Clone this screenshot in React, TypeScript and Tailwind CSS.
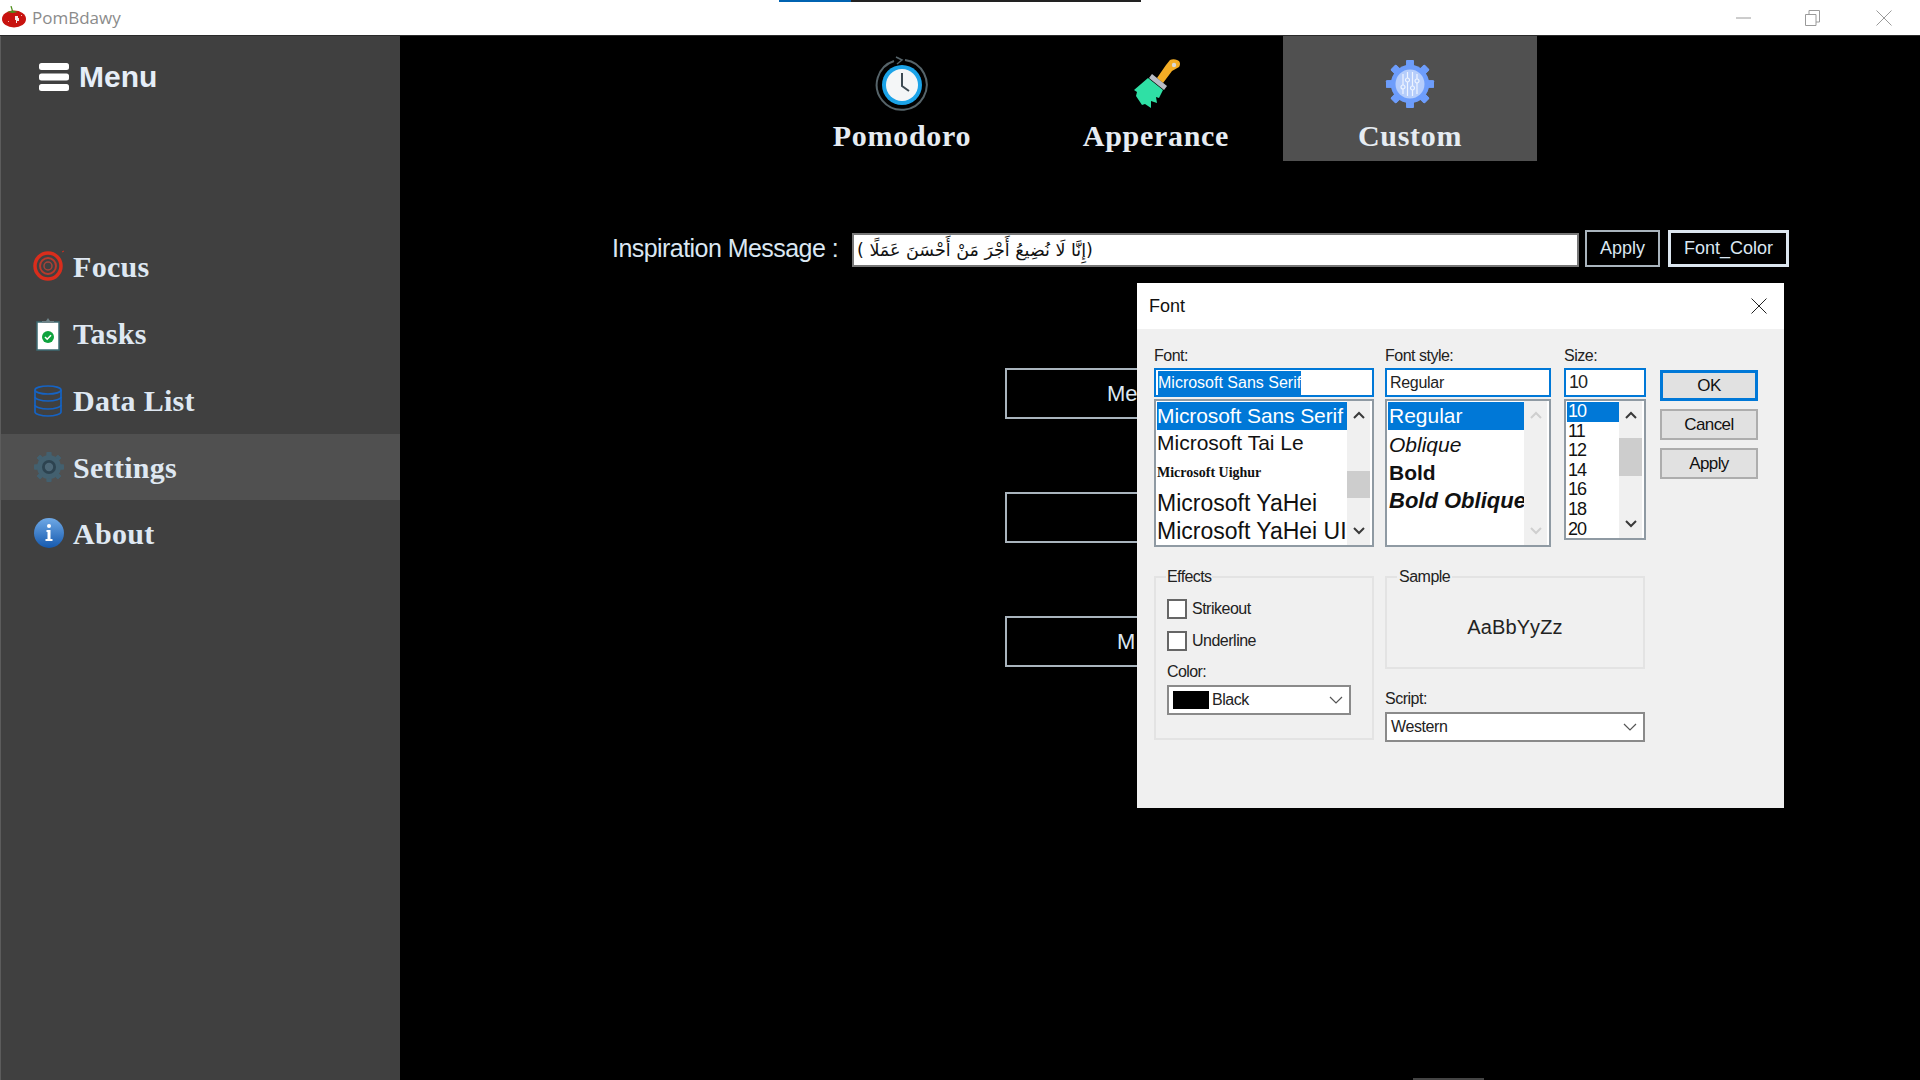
const dialogFont = "[font-family:'Liberation_Sans',Arial,sans-serif]";

const menuItems = [
  { label: 'Focus', icon: <TargetIcon />, rowClass: 'h-[68px]' },
  { label: 'Tasks', icon: <ClipboardIcon />, rowClass: 'h-[67px]' },
  { label: 'Data List', icon: <DatabaseIcon />, rowClass: 'h-[67px]' },
  { label: 'Settings', icon: <SettingsIcon />, rowClass: 'h-[66px] bg-[#505050]' },
  { label: 'About', icon: <InfoIcon />, rowClass: 'h-[66px]' },
];

function TomatoIcon() {
  return (
    <svg width="26" height="24" viewBox="0 0 26 24">
      <ellipse cx="13" cy="13" rx="12" ry="8.500" fill="#c8130f" />
      <path d="M10 0l1.500 5" stroke="#4f8f1c" strokeWidth="1.200" />
      <path d="M6 6l5.500-1.500L17 6l-5.500 1z" fill="#4f8f1c" />
      <path d="M14 10h3v2h1v3h-2v2h-1v-3h-1z" fill="#f7e9e6" />
      <rect x="7" y="15" width="1" height="1" fill="#f6b9b2" />
      <rect x="20" y="9" width="1" height="1" fill="#f6b9b2" />
    </svg>
  );
}

function WindowControls() {
  return (
    <div className="flex items-center text-[#9a9a9a]">
      <svg width="15" height="15" viewBox="0 0 15 15" className="mr-[54px]">
        <path d="M0 8h15" stroke="currentColor" />
      </svg>
      <svg width="15" height="16" viewBox="0 0 15 16" className="mr-[56px]">
        <path d="M.5 4.500h10.500v11H.5zM4 4.500V.5h10.500V12H11" fill="none" stroke="currentColor" />
      </svg>
      <svg width="16" height="16" viewBox="0 0 16 16" className="mr-[28px]">
        <path d="M.5.5l15 15M15.500.5l-15 15" stroke="currentColor" />
      </svg>
    </div>
  );
}

function HamburgerIcon() {
  return (
    <svg width="30" height="28" viewBox="0 0 30 28">
      <rect x="0" y="0" width="30" height="7" rx="2.500" fill="#fff" />
      <rect x="0" y="10.500" width="30" height="7" rx="2.500" fill="#fff" />
      <rect x="0" y="21" width="30" height="7" rx="2.500" fill="#fff" />
    </svg>
  );
}

function TargetIcon() {
  return (
    <svg width="32" height="32" viewBox="0 0 32 32">
      <circle cx="15" cy="16" r="13" fill="none" stroke="#d92d1c" strokeWidth="3.500" />
      <circle cx="15" cy="16" r="8" fill="none" stroke="#b8392c" strokeWidth="2" />
      <circle cx="15" cy="16" r="4" fill="none" stroke="#a8433a" strokeWidth="1.500" />
      <path d="M29 2l2-1" stroke="#d92d1c" />
    </svg>
  );
}

function ClipboardIcon() {
  return (
    <svg width="32" height="34" viewBox="0 0 32 34">
      <rect x="4" y="5" width="22" height="28" fill="#fff" stroke="#3c6a72" strokeWidth="1.500" />
      <path d="M9 6V4h4l2-3 2 3h4v2z" fill="#6d8388" />
      <circle cx="15" cy="20" r="6" fill="#0ea33e" />
      <path d="M12 20l2.200 2.200 3.800-4" fill="none" stroke="#fff" strokeWidth="1.600" />
    </svg>
  );
}

function DatabaseIcon() {
  return (
    <svg width="32" height="32" viewBox="0 0 32 32" fill="none" stroke="#1563c4" strokeWidth="1.700">
      <ellipse cx="15" cy="5" rx="13" ry="4" />
      <path d="M2 5v22c0 2 6 4 13 4s13-2 13-4V5" />
      <path d="M2 12c0 2 6 4 13 4s13-2 13-4M2 20c0 2 6 4 13 4s13-2 13-4" />
    </svg>
  );
}

function Gear({ fill, size, teeth = 8 }: { fill: string; size: number; teeth?: number }) {
  const angles = Array.from({ length: teeth }, (_, i) => (i * 360) / teeth);
  return (
    <g>
      {angles.map(a => (
        <rect key={a} x={-size * 0.16} y={-size} width={size * 0.32} height={size * 2} rx={size * 0.05} fill={fill} transform={`rotate(${a})`} />
      ))}
      <circle r={size * 0.8} fill={fill} />
    </g>
  );
}

function SettingsIcon() {
  return (
    <svg width="32" height="32" viewBox="-16 -16 32 32">
      <Gear fill="#43606f" size={15} />
      <circle r="7" fill="#2d4350" />
      <circle r="4.200" fill="#4d6776" />
    </svg>
  );
}

function InfoIcon() {
  return (
    <svg width="32" height="32" viewBox="0 0 32 32">
      <defs>
        <linearGradient id="infoFill" x1="0" y1="0" x2="0" y2="1">
          <stop offset="0" stopColor="#6fa9e6" />
          <stop offset="1" stopColor="#1559ae" />
        </linearGradient>
      </defs>
      <circle cx="16" cy="16" r="15" fill="url(#infoFill)" />
      <circle cx="16" cy="9" r="2" fill="#fff" />
      <path d="M13.500 13h4v9h2v2h-7v-2h2v-7h-1z" fill="#fff" />
    </svg>
  );
}

function ClockIcon() {
  return (
    <svg width="54" height="56" viewBox="0 0 54 56">
      <path d="M30 4A25 25 0 1 1 19 5" fill="none" stroke="#56646a" strokeWidth="2" />
      <path d="M21 1l6 3-5 4" fill="none" stroke="#56646a" strokeWidth="1.500" />
      <circle cx="27" cy="29" r="20" fill="#1ba3e8" />
      <circle cx="27" cy="29" r="16" fill="#f4f6f7" />
      <path d="M27 17v13l7 5" fill="none" stroke="#3d4a52" strokeWidth="2" />
    </svg>
  );
}

function BrushIcon() {
  return (
    <svg width="52" height="52" viewBox="0 0 52 52">
      <path d="M47 2c3 1 4 4 2 7l-7 4-9 12-6-5 9-13 4-5c2-1 5-1 7 0z" fill="#f4ad25" />
      <circle cx="44" cy="7" r="2.200" fill="#d9d9d9" />
      <path d="M22 16l15 12-3 4-15-12z" fill="#b9bcc6" />
      <path d="M18 20l15 12-4 8-3-1 1 6-6-2 0 7-6-4-3 1-6-9 1-4-3-2z" fill="#2fe0a5" />
    </svg>
  );
}

function CustomGearIcon() {
  return (
    <svg width="50" height="50" viewBox="-25 -25 50 50">
      <Gear fill="#6d9dfb" size={24} />
      <circle r="14.500" fill="#b5cdfb" />
      <g stroke="#eef4ff" strokeWidth="1.200" fill="#b5cdfb">
        <path d="M-7-10V10M-2.500-12V12M2.500-12V12M7-10V10" />
        <circle cx="-7" cy="3" r="2" />
        <circle cx="-2.500" cy="-4" r="2" />
        <circle cx="2.500" cy="4" r="2" />
        <circle cx="7" cy="-3" r="2" />
      </g>
    </svg>
  );
}

function Chevron({ dir = 'down', color = '#3a3a3a' }: { dir?: 'up' | 'down'; color?: string }) {
  return (
    <svg width="12" height="8" viewBox="0 0 12 8">
      <path d={dir === 'up' ? 'M1 7l5-5 5 5' : 'M1 1l5 5 5-5'} fill="none" stroke={color} strokeWidth="2" />
    </svg>
  );
}

function ComboChevron() {
  return (
    <svg width="14" height="9" viewBox="0 0 14 9">
      <path d="M1 1l6 6 6-6" fill="none" stroke="#555" strokeWidth="1.200" />
    </svg>
  );
}

function Scrollbar({ thumbClass, color }: { thumbClass?: string; color?: string }) {
  return (
    <div className="w-[23px] mr-[2px] bg-[#f0f0f0] flex flex-col items-center justify-between py-[10px] relative">
      <Chevron dir="up" color={color} />
      {thumbClass && <div className={thumbClass} />}
      <Chevron color={color} />
    </div>
  );
}

function CheckRow({ label }: { label: string }) {
  return (
    <div className="flex items-center gap-[5px] h-[20px] text-[16px] tracking-[-0.5px] text-[#222]">
      <div className="w-[20px] h-[20px] bg-white border-2 border-[#666]" />
      {label}
    </div>
  );
}

function FontDialog() {
  return (
    <div className={`absolute left-[1137px] top-[283px] w-[647px] h-[525px] bg-[#f0f0f0] ${dialogFont}`}>
      <div className="h-[46px] bg-white flex items-center justify-between pl-[12px] pr-[17px] text-[18px] text-[#111]">
        Font
        <svg width="16" height="16" viewBox="0 0 16 16">
          <path d="M.5.5l15 15M15.500.5l-15 15" stroke="#222" />
        </svg>
      </div>

      <div className="pl-[17px] pt-[17px]">
        <div className="flex">
          <div className="w-[220px]">
            <div className="h-[20px] mb-[2px] text-[16px] leading-[20px] tracking-[-0.5px] text-[#222]">Font:</div>
            <div className="h-[29px] bg-white border-2 border-[#0078d7] flex items-center pl-[2px] text-[16px] text-[#222]">
              <span className="bg-[#0078d7] text-white">Microsoft Sans Serif</span>
            </div>
            <div className="mt-[2px] h-[148px] bg-white border-2 border-[#8f9aa3] flex text-[21px] text-[#111]">
              <div className="flex-1 min-w-0 pt-[1px] pl-[1px] overflow-hidden whitespace-nowrap">
                <div className="h-[28px] leading-[28px] bg-[#0078d7] text-white tracking-[-0.1px]">Microsoft Sans Serif</div>
                <div className="h-[26px] leading-[26px]">Microsoft Tai Le</div>
                <div className="h-[33px] leading-[33px] text-[14px] font-['Liberation_Serif'] font-bold">Microsoft Uighur</div>
                <div className="h-[28px] leading-[28px] text-[23px]">Microsoft YaHei</div>
                <div className="h-[28px] leading-[28px] text-[23px]">Microsoft YaHei UI</div>
              </div>
              <Scrollbar thumbClass="absolute left-0 top-[70px] w-[23px] h-[27px] bg-[#cdcdcd]" />
            </div>
          </div>

          <div className="w-[166px] ml-[11px]">
            <div className="h-[20px] mb-[2px] text-[16px] leading-[20px] tracking-[-0.5px] text-[#222]">Font style:</div>
            <div className="h-[29px] bg-white border-2 border-[#0078d7] flex items-center pl-[3px] text-[16px] tracking-[-0.3px] text-[#222]">Regular</div>
            <div className="mt-[2px] h-[148px] bg-white border-2 border-[#8f9aa3] flex text-[21px] text-[#111]">
              <div className="flex-1 min-w-0 pt-[1px] pl-[1px] overflow-hidden whitespace-nowrap">
                <div className="h-[28px] leading-[28px] bg-[#0078d7] text-white pl-[1px]">Regular</div>
                <div className="h-[29px] leading-[29px] italic pl-[1px]">Oblique</div>
                <div className="h-[28px] leading-[28px] font-bold pl-[1px]">Bold</div>
                <div className="h-[28px] leading-[28px] text-[22px] font-bold italic pl-[1px]">Bold Oblique</div>
              </div>
              <Scrollbar color="#cfcfcf" />
            </div>
          </div>

          <div className="w-[82px] ml-[13px]">
            <div className="h-[20px] mb-[2px] text-[16px] leading-[20px] tracking-[-0.5px] text-[#222]">Size:</div>
            <div className="h-[29px] bg-white border-2 border-[#0078d7] flex items-center pl-[3px] text-[18px] tracking-[-1px] text-[#222]">10</div>
            <div className="mt-[2px] h-[141px] bg-white border-2 border-[#8f9aa3] flex text-[18px] tracking-[-1px] text-[#111]">
              <div className="flex-1 pt-[1px] pl-[1px]">
                {['10', '11', '12', '14', '16', '18', '20'].map((size, i) => (
                  <div key={size} className={i === 0 ? 'h-[19.6px] leading-[19.6px] bg-[#0078d7] text-white pl-[1px]' : 'h-[19.6px] leading-[19.6px] pl-[1px]'}>
                    {size}
                  </div>
                ))}
              </div>
              <Scrollbar thumbClass="absolute left-0 top-[37px] w-[23px] h-[38px] bg-[#cdcdcd]" />
            </div>
          </div>

          <div className="w-[98px] ml-[14px] pt-[24px] flex flex-col gap-[8px] text-[17px] tracking-[-0.6px] text-[#111]">
            <div className="h-[31px] bg-[#e1e1e1] border-[3px] border-[#0078d7] flex items-center justify-center">OK</div>
            <div className="h-[31px] bg-[#e1e1e1] border-2 border-[#adadad] flex items-center justify-center">Cancel</div>
            <div className="h-[31px] bg-[#e1e1e1] border-2 border-[#adadad] flex items-center justify-center">Apply</div>
          </div>
        </div>

        <div className="flex mt-[29px]">
          <div className="relative w-[220px] h-[164px] border-2 border-[#e3e3e3] pl-[11px] pt-[21px]">
            <span className="absolute left-[10px] top-[-11px] bg-[#f0f0f0] px-[1px] text-[16px] leading-[20px] tracking-[-0.6px] text-[#222]">Effects</span>
            <div className="flex flex-col gap-[12px]">
              <CheckRow label="Strikeout" />
              <CheckRow label="Underline" />
            </div>
            <div className="mt-[11px] h-[20px] text-[16px] leading-[20px] tracking-[-0.6px] text-[#222]">Color:</div>
            <div className="mt-[3px] w-[184px] h-[30px] bg-white border-2 border-[#8a8a8a] flex items-center pl-[4px] pr-[6px] text-[16px] tracking-[-0.5px] text-[#222]">
              <div className="w-[36px] h-[18px] bg-black mr-[3px]" />
              <span className="flex-1">Black</span>
              <ComboChevron />
            </div>
          </div>

          <div className="w-[260px] ml-[11px]">
            <div className="relative h-[93px] border-2 border-[#e3e3e3] flex items-center justify-center pt-[8px] text-[20px] tracking-[0.1px] text-[#222]">
              <span className="absolute left-[10px] top-[-11px] bg-[#f0f0f0] px-[2px] text-[16px] leading-[20px] tracking-[-0.5px] text-[#222]">Sample</span>
              AaBbYyZz
            </div>
            <div className="mt-[20px] h-[20px] text-[16px] leading-[20px] tracking-[-0.5px] text-[#222]">Script:</div>
            <div className="mt-[3px] h-[30px] bg-white border-2 border-[#8a8a8a] flex items-center justify-between pl-[4px] pr-[6px] text-[16px] tracking-[-0.4px] text-[#222]">
              Western
              <ComboChevron />
            </div>
          </div>
        </div>
      </div>
    </div>
  );
}

function Tab({ label, icon, active }: { label: string; icon: React.ReactNode; active?: boolean }) {
  return (
    <div
      className={
        active
          ? 'w-[254px] h-[125px] bg-[#505050] flex flex-col items-center pt-[19px]'
          : 'w-[254px] h-[125px] flex flex-col items-center pt-[19px]'
      }
    >
      <div className="h-[58px] flex items-center justify-center">{icon}</div>
      <div className="mt-[6px] text-[30px] leading-[34px] font-bold tracking-[0.7px] text-[#e6ecf2] font-['Liberation_Serif',serif]">{label}</div>
    </div>
  );
}

export default function App() {
  return (
    <div className="relative w-[1920px] h-[1080px] overflow-hidden bg-black flex flex-col font-['Liberation_Sans',Arial,sans-serif]">
      <div className="absolute left-[779px] top-0 w-[72px] h-[2px] bg-[#0063b1]" />
      <div className="absolute left-[851px] top-0 w-[290px] h-[2px] bg-[#222]" />

      <div className="h-[35px] shrink-0 bg-white flex items-center justify-between">
        <div className="flex items-center gap-[5px] pl-[1px] text-[17px] text-[#8b8b8b] font-['Open_Sans',sans-serif]">
          <TomatoIcon />
          PomBdawy
        </div>
        <WindowControls />
      </div>

      <div className="flex flex-1 border-t border-[#2a2a2a]">
        <aside className="w-[400px] shrink-0 bg-[#404040] border-l border-[#5c5c5c]">
          <div className="flex items-start gap-[10px] pl-[38px] pt-[27px] h-[196px] text-[30px] leading-[28px] font-bold text-[#e6eef8]">
            <HamburgerIcon />
            Menu
          </div>
          {menuItems.map(item => (
            <div
              key={item.label}
              className={`${item.rowClass} flex items-center gap-[8px] pl-[32px] text-[30px] font-bold text-[#dfe8f2] font-["Liberation_Serif",serif] tracking-[0.3px]`}
            >
              {item.icon}
              <span>{item.label}</span>
            </div>
          ))}
        </aside>

        <main className="flex-1 min-w-0">
          <div className="flex pl-[375px]">
            <Tab label="Pomodoro" icon={<ClockIcon />} />
            <Tab label="Apperance" icon={<BrushIcon />} />
            <Tab label="Custom" icon={<CustomGearIcon />} active />
          </div>

          <div className="flex items-center mt-[69px] pl-[212px] h-[37px]">
            <span className="w-[240px] text-[25px] tracking-[-0.55px] text-[#dbe7f2]">Inspiration Message :</span>
            <div className="w-[727px] h-[34px] mt-[3px] bg-white border-2 border-[#777] flex items-center pl-[3px] text-[17.5px] text-[#111] font-['DejaVu_Sans',sans-serif]">
              <span dir="rtl">(إِنَّا لَا نُضِيعُ أَجْرَ مَنْ أَحْسَنَ عَمَلًا )</span>
            </div>
            <div className="ml-[6px] w-[75px] h-[37px] border-2 border-[#a9b4bd] flex items-center justify-center text-[18px] text-[#dbe7f2]">Apply</div>
            <div className="ml-[8px] w-[121px] h-[37px] border-[3px] border-[#dce6ef] flex items-center justify-center text-[18px] text-[#dbe7f2]">Font_Color</div>
          </div>

          <div className="ml-[605px] mt-[101px] w-[500px] flex flex-col gap-[73px]">
            <div className="h-[51px] border-2 border-[#a9b4bd] flex items-center pl-[100px] text-[22px] text-[#dbe7f2]">Me</div>
            <div className="h-[51px] border-2 border-[#a9b4bd]" />
            <div className="h-[51px] border-2 border-[#a9b4bd] flex items-center pl-[110px] text-[22px] text-[#dbe7f2]">M</div>
          </div>
        </main>
      </div>

      <FontDialog />
      <div className="absolute left-[1413px] bottom-0 w-[71px] h-[2px] bg-[#444]" />
    </div>
  );
}
